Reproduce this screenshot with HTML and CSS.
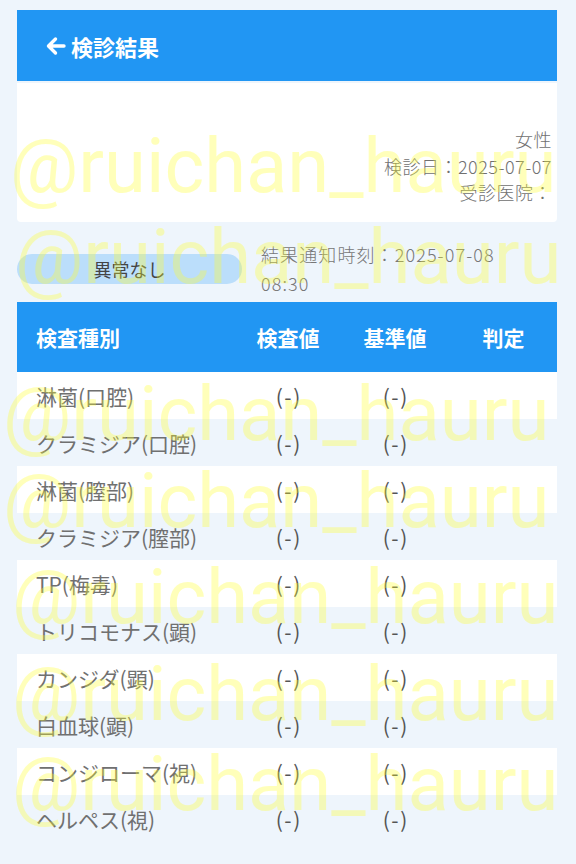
FILE: index.html
```html
<!DOCTYPE html>
<html lang="ja">
<head>
<meta charset="utf-8">
<title>検診結果</title>
<link rel="stylesheet" href="styles.css">
</head>
<body>
<div class="page">
  <header class="topbar">
    <svg class="back" viewBox="0 0 24 24" width="24" height="24"><path d="M20 12H5M11.5 5L4.5 12l7 7" fill="none" stroke="#fff" stroke-width="3.4" stroke-linecap="round" stroke-linejoin="round"/></svg>
    <span class="title">検診結果</span>
  </header>
  <section class="info">
    <div class="line">女性</div>
    <div class="line">検診日：2025-07-07</div>
    <div class="line">受診医院：</div>
  </section>
  <section class="status">
    <div class="pill">異常なし</div>
    <div class="notice">結果通知時刻：2025-07-08 08:30</div>
  </section>
  <section class="table">
    <div class="thead">
      <div class="c name">検査種別</div>
      <div class="c">検査値</div>
      <div class="c">基準値</div>
      <div class="c">判定</div>
    </div>
    <div class="row"><div class="c name">淋菌(口腔)</div><div class="c v">(-)</div><div class="c v">(-)</div><div class="c v"></div></div>
    <div class="row"><div class="c name">クラミジア(口腔)</div><div class="c v">(-)</div><div class="c v">(-)</div><div class="c v"></div></div>
    <div class="row"><div class="c name">淋菌(膣部)</div><div class="c v">(-)</div><div class="c v">(-)</div><div class="c v"></div></div>
    <div class="row"><div class="c name">クラミジア(膣部)</div><div class="c v">(-)</div><div class="c v">(-)</div><div class="c v"></div></div>
    <div class="row"><div class="c name">TP(梅毒)</div><div class="c v">(-)</div><div class="c v">(-)</div><div class="c v"></div></div>
    <div class="row"><div class="c name">トリコモナス(顕)</div><div class="c v">(-)</div><div class="c v">(-)</div><div class="c v"></div></div>
    <div class="row"><div class="c name">カンジダ(顕)</div><div class="c v">(-)</div><div class="c v">(-)</div><div class="c v"></div></div>
    <div class="row"><div class="c name">白血球(顕)</div><div class="c v">(-)</div><div class="c v">(-)</div><div class="c v"></div></div>
    <div class="row"><div class="c name">コンジローマ(視)</div><div class="c v">(-)</div><div class="c v">(-)</div><div class="c v"></div></div>
    <div class="row"><div class="c name">ヘルペス(視)</div><div class="c v">(-)</div><div class="c v">(-)</div><div class="c v"></div></div>
  </section>
</div>
<div class="wm" aria-hidden="true">
  <span class="wm1">@ruichan_hauru</span>
  <span class="wm2">@ruichan_hauru</span>
  <span class="wm3">@ruichan_hauru</span>
  <span class="wm4">@ruichan_hauru</span>
  <span class="wm5">@ruichan_hauru</span>
  <span class="wm6">@ruichan_hauru</span>
  <span class="wm7">@ruichan_hauru</span>
</div>
</body>
</html>
```
FILE: styles.css
```css
html, body {
  margin: 0;
  padding: 0;
}
body {
  background: #eef5fc;
  font-family: "Noto Sans CJK JP", sans-serif;
  width: 576px;
  height: 864px;
  overflow: hidden;
  position: relative;
}
.page {
  padding: 10px 19px 0 17px;
}
.topbar {
  height: 71px;
  background: #2196f3;
  display: flex;
  align-items: center;
  padding-left: 27px;
  gap: 3px;
  color: #fff;
}
.back {
  display: block;
}
.title {
  font-size: 22px;
  font-weight: 700;
}
.info {
  margin-top: 2px;
  background: #fff;
  height: 139px;
  box-sizing: border-box;
  padding: 43px 5px 0 0;
  text-align: right;
  color: #707070;
  font-size: 18px;
  font-weight: 300;
  letter-spacing: 0.5px;
  line-height: 26.5px;
  border-radius: 0 0 4px 4px;
}
.status {
  display: flex;
  align-items: center;
  padding: 18px 0 4px;
}
.pill {
  width: 225px;
  height: 30px;
  border-radius: 15px;
  background: #bbdefb;
  color: #444;
  font-size: 18px;
  line-height: 30px;
  text-align: center;
  margin-right: 19px;
  flex: none;
}
.notice {
  width: 250px;
  color: #777;
  font-size: 18px;
  font-weight: 300;
  letter-spacing: 1.1px;
  line-height: 29px;
}
.thead, .row {
  display: grid;
  grid-template-columns: 219px 104px 110px 107px;
  align-items: center;
}
.thead {
  height: 70px;
  background: #2196f3;
  color: #fff;
  font-size: 21px;
  font-weight: 700;
}
.c {
  text-align: center;
}
.c.name {
  text-align: left;
  padding-left: 19px;
}
.row {
  height: 47px;
  font-size: 21px;
  color: #707070;
}
.row:nth-child(even) {
  background: #fff;
}
.row .v {
  color: #555;
  letter-spacing: 1.5px;
  text-indent: 1.5px;
}
.wm {
  position: absolute;
  inset: 0;
  pointer-events: none;
}
.wm span {
  position: absolute;
  font-family: Roboto, sans-serif;
  font-size: 76px;
  line-height: 1;
  white-space: nowrap;
  color: rgba(255, 255, 40, 0.32);
}
.wm1 { left: 10px; top: 128px; }
.wm2 { left: 15px; top: 219px; }
.wm3 { left: 3px; top: 376px; }
.wm4 { left: 3px; top: 463px; }
.wm5 { left: 12px; top: 559px; }
.wm6 { left: 12px; top: 656px; }
.wm7 { left: 12px; top: 746px; }
```
